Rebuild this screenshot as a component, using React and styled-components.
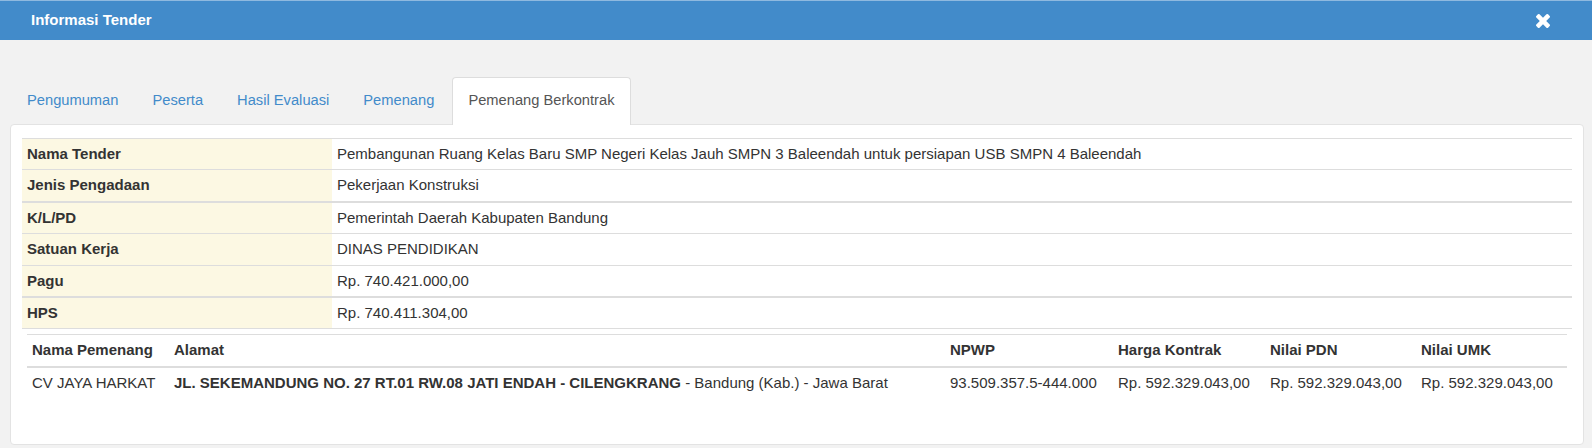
import styled, { createGlobalStyle } from "styled-components";

const GlobalStyle = createGlobalStyle`
  html, body {
    margin: 0;
    padding: 0;
    background: #f2f2f2;
  }
  body {
    font-family: "Liberation Sans", Arial, sans-serif;
    font-size: 15px;
    line-height: 20.4px;
    color: #333;
  }
`;

const tabs = ["Pengumuman", "Peserta", "Hasil Evaluasi", "Pemenang", "Pemenang Berkontrak"];

const details = [
  { label: "Nama Tender", value: "Pembangunan Ruang Kelas Baru SMP Negeri Kelas Jauh SMPN 3 Baleendah untuk persiapan USB SMPN 4 Baleendah" },
  { label: "Jenis Pengadaan", value: "Pekerjaan Konstruksi" },
  { label: "K/L/PD", value: "Pemerintah Daerah Kabupaten Bandung", thick: true },
  { label: "Satuan Kerja", value: "DINAS PENDIDIKAN" },
  { label: "Pagu", value: "Rp. 740.421.000,00" },
  { label: "HPS", value: "Rp. 740.411.304,00", thick: true },
];

const winnerCols = [
  { title: "Nama Pemenang", width: 142 },
  { title: "Alamat", width: 776 },
  { title: "NPWP", width: 168 },
  { title: "Harga Kontrak", width: 152 },
  { title: "Nilai PDN", width: 151 },
  { title: "Nilai UMK" },
];

const CloseIcon = () => (
  <svg width="14" height="14" viewBox="110 366 1188 1188" fill="#fff">
    <path d="M1298 1322q0 40-28 68l-136 136q-28 28-68 28t-68-28l-294-294-294 294q-28 28-68 28t-68-28l-136-136q-28-28-28-68t28-68l294-294-294-294q-28-28-28-68t28-68l136-136q28-28 68-28t68 28l294 294 294-294q28-28 68-28t68 28l136 136q28 28 28 68t-28 68l-294 294 294 294q28 28 28 68z" />
  </svg>
);

const App = () => {
  return (
    <>
      <GlobalStyle />
      <Header>
        <Title>Informasi Tender</Title>
        <CloseButton aria-label="close">
          <CloseIcon />
        </CloseButton>
      </Header>
      <Body>
        <TabList>
          {tabs.map((t) => (
            <Tab key={t} $active={t === "Pemenang Berkontrak"}>
              {t}
            </Tab>
          ))}
        </TabList>
        <Card>
          <InfoTable>
            <tbody>
              {details.map((d) => (
                <InfoRow key={d.label} $thick={d.thick}>
                  <Label>{d.label}</Label>
                  <Value>{d.value}</Value>
                </InfoRow>
              ))}
              <InfoRow>
                <NestCell colSpan={2}>
                  <WinnerTable>
                    <thead>
                      <tr>
                        {winnerCols.map((c) => (
                          <HeadCell key={c.title} $width={c.width}>
                            {c.title}
                          </HeadCell>
                        ))}
                      </tr>
                    </thead>
                    <tbody>
                      <tr>
                        <Cell>CV JAYA HARKAT</Cell>
                        <Cell>
                          <b>JL. SEKEMANDUNG NO. 27 RT.01 RW.08 JATI ENDAH - CILENGKRANG</b> - Bandung (Kab.) - Jawa Barat
                        </Cell>
                        <Cell>93.509.357.5-444.000</Cell>
                        <Cell>Rp. 592.329.043,00</Cell>
                        <Cell>Rp. 592.329.043,00</Cell>
                        <Cell>Rp. 592.329.043,00</Cell>
                      </tr>
                    </tbody>
                  </WinnerTable>
                </NestCell>
              </InfoRow>
            </tbody>
          </InfoTable>
        </Card>
      </Body>
    </>
  );
};

// styled components

const Header = styled.div`
  height: 39px;
  background: #428bca;
  border-top: 1px solid #8fb9df;
  display: flex;
  align-items: center;
  justify-content: space-between;
  padding: 0 42px 0 31px;
`;

const Title = styled.h4`
  margin: 0;
  color: #fff;
  font-size: 15px;
  font-weight: bold;
`;

const CloseButton = styled.button`
  border: 0;
  background: none;
  padding: 0;
  display: flex;
  cursor: pointer;
`;

const Body = styled.div`
  padding: 37px 8px 4px 10px;
`;

const TabList = styled.ul`
  list-style: none;
  margin: 0;
  padding: 0 0 0 1px;
  display: flex;
  align-items: flex-start;
  height: 47px;
`;

const Tab = styled.li`
  position: relative;
  z-index: 1;
  margin-right: 2px;
  padding: 12px 15px ${(p) => (p.$active ? "14px" : "13px")};
  font-size: 14.7px;
  line-height: 21px;
  color: ${(p) => (p.$active ? "#555" : "#428bca")};
  background: ${(p) => (p.$active ? "#fff" : "transparent")};
  border: 1px solid ${(p) => (p.$active ? "#ddd" : "transparent")};
  border-bottom: 0;
  border-radius: 4px 4px 0 0;
  cursor: pointer;
`;

const Card = styled.div`
  background: #fff;
  border: 1px solid #e3e3e3;
  border-radius: 4px;
  padding: 13px 11px 21px;
`;

const InfoTable = styled.table`
  width: 100%;
  border-collapse: collapse;
`;

const InfoRow = styled.tr`
  border-top: ${(p) => (p.$thick ? "2px" : "1px")} solid #ddd;
`;

const Label = styled.th`
  width: 300px;
  padding: 5px;
  text-align: left;
  font-weight: bold;
  background: #fcf8e3;
`;

const Value = styled.td`
  padding: 5px;
`;

const NestCell = styled.td`
  padding: 5px;
`;

const WinnerTable = styled.table`
  width: 100%;
  border-collapse: collapse;
  table-layout: fixed;
  margin-bottom: 20px;
  border-top: 1px solid #ddd;
`;

const HeadCell = styled.th`
  box-sizing: border-box;
  width: ${(p) => (p.$width ? `${p.$width}px` : "auto")};
  padding: 5px;
  text-align: left;
  font-weight: bold;
  border-bottom: 2px solid #ddd;
`;

const Cell = styled.td`
  padding: 5px;
  white-space: nowrap;
`;

export default App;
